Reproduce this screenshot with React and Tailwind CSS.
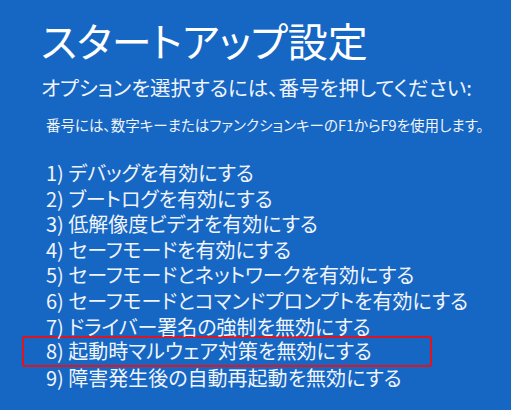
import React from "react";

const options = [
  "1) デバッグを有効にする",
  "2) ブートログを有効にする",
  "3) 低解像度ビデオを有効にする",
  "4) セーフモードを有効にする",
  "5) セーフモードとネットワークを有効にする",
  "6) セーフモードとコマンドプロンプトを有効にする",
  "7) ドライバー署名の強制を無効にする",
  "8) 起動時マルウェア対策を無効にする",
  "9) 障害発生後の自動再起動を無効にする",
];

const App = () => {
  return (
    <div
      className="w-[511px] h-[410px] overflow-hidden bg-[#1666c3] text-white [font-feature-settings:'palt']"
      style={{ fontFamily: '"Noto Sans CJK JP", "Noto Sans", sans-serif' }}
    >
      <div className="pt-[16px] pl-[41px]">
        <h1 className="text-[40px] leading-[48px] font-normal">スタートアップ設定</h1>
        <p className="mt-[10px] text-[20.5px] leading-[26px] text-[#f0f4fb] whitespace-nowrap">
          オプションを選択するには、番号を押してください:
        </p>
        <p className="mt-[15px] ml-[5px] text-[14.5px] leading-[20px] text-[#f0f4fb] whitespace-nowrap">
          番号には、数字キーまたはファンクションキーのF1からF9を使用します。
        </p>
      </div>
      <ul className="mt-[25px] pl-[22px]">
        {options.map((item, index) => (
          <li
            key={index}
            className={
              index === 7
                ? "w-[410px] h-[31px] -my-[2.7px] border-2 border-[#e0141e] rounded-[2px] pl-[22px] text-[20px] leading-[26px] text-[#f0f4fb] whitespace-nowrap"
                : "h-[25.6px] pl-[24px] text-[20px] leading-[25.6px] text-[#f0f4fb] whitespace-nowrap"
            }
          >
            {item}
          </li>
        ))}
      </ul>
    </div>
  );
};

export default App;
